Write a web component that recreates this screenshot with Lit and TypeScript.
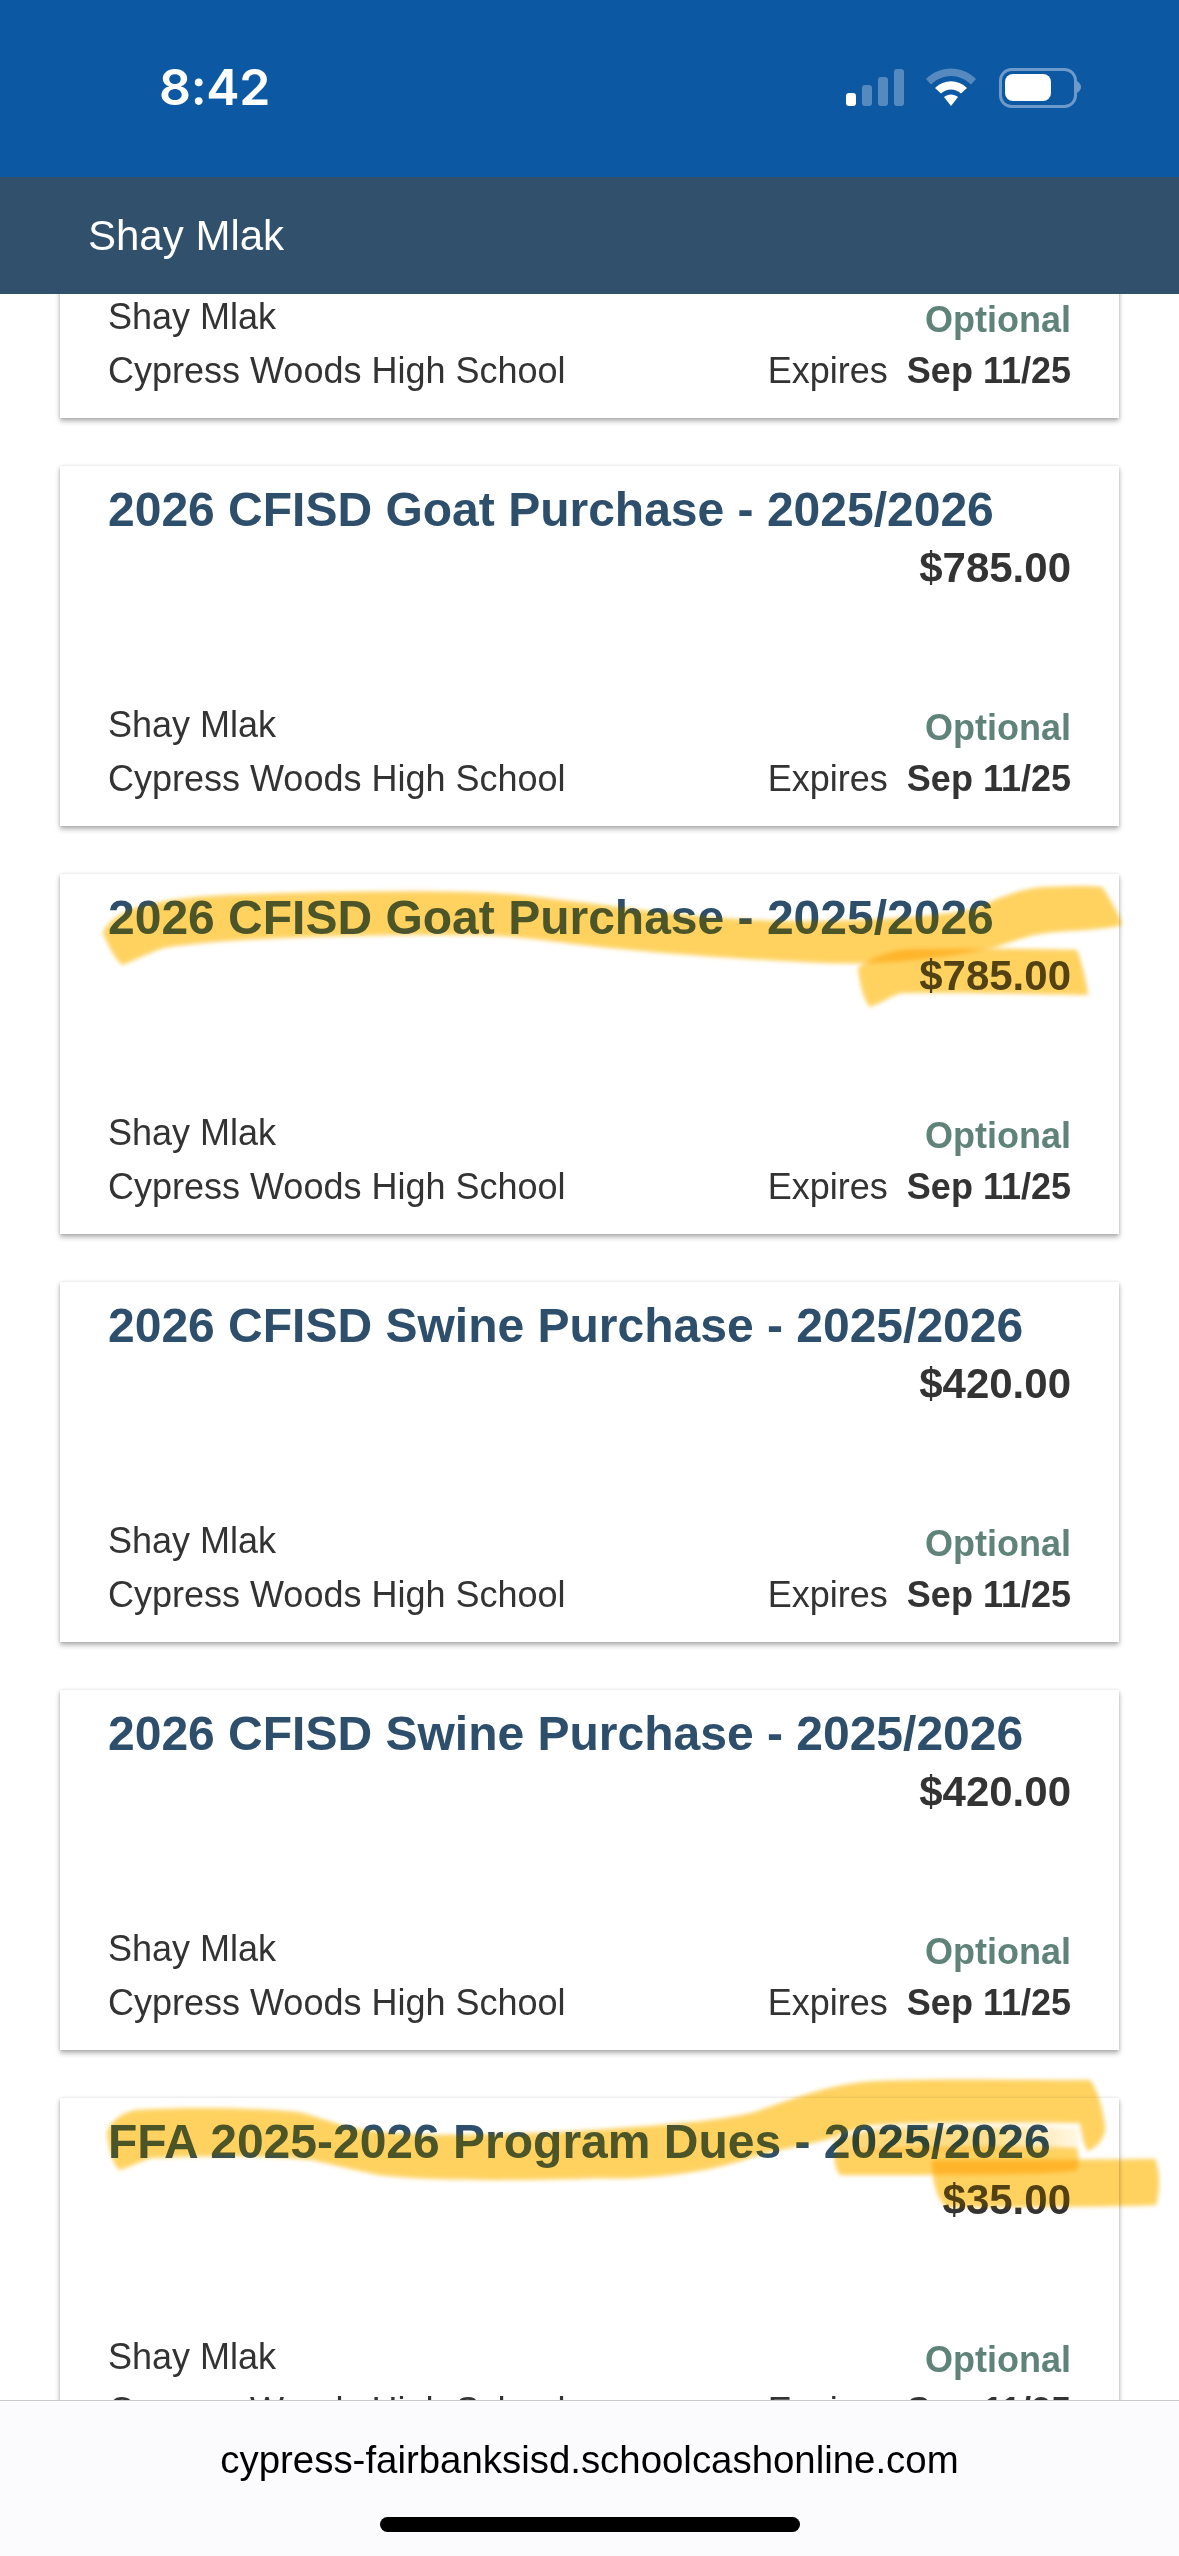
import { LitElement, html, css, svg } from "lit";
import { customElement } from "lit/decorators.js";

interface Fee { title: string; price: string; }

const FEES: Fee[] = [
  { title: "2026 CFISD Goat Purchase - 2025/2026", price: "$785.00" },
  { title: "2026 CFISD Goat Purchase - 2025/2026", price: "$785.00" },
  { title: "2026 CFISD Goat Purchase - 2025/2026", price: "$785.00" },
  { title: "2026 CFISD Swine Purchase - 2025/2026", price: "$420.00" },
  { title: "2026 CFISD Swine Purchase - 2025/2026", price: "$420.00" },
  { title: "FFA 2025-2026 Program Dues - 2025/2026", price: "$35.00" },
];

const MARKS = [
  "M103 933 C106 925 115 915 135 908 C160 902 180 897 230 895 C320 892 410 890 489 893 C560 897 650 915 752 920 C820 923 900 920 960 912 C980 908 990 902 1000 898 C1020 890 1035 887 1050 887 C1070 886 1090 886 1102 887 C1110 900 1118 912 1122 925 C1108 928 1095 929 1083 930 C1065 931 1050 932 1033 935 C1018 939 1005 944 993 948 C950 957 890 965 827 963 C760 960 680 955 601 947 C540 940 520 936 480 935 C390 934 290 936 213 942 C195 944 178 945 163 948 C148 953 135 960 122 965 C115 958 108 945 103 933 Z",
  "M858 968 C870 958 885 953 900 950 C950 948 1030 949 1077 950 C1082 965 1086 980 1088 995 C1030 994 950 992 900 993 C890 997 880 1003 870 1007 C864 1000 860 985 858 968 Z",
  "M107 2133 C110 2122 122 2112 137 2110 C190 2107 250 2108 297 2112 C315 2116 330 2122 347 2127 C380 2133 410 2135 447 2135 C530 2135 600 2130 662 2125 C700 2122 730 2118 752 2113 C790 2100 825 2086 865 2082 C930 2078 1020 2081 1090 2080 C1097 2090 1102 2105 1105 2127 C1105 2138 1098 2146 1088 2151 C1084 2145 1082 2135 1080 2123 C1000 2122 900 2122 870 2125 C850 2130 835 2137 825 2140 C800 2146 775 2150 752 2157 C710 2172 650 2180 601 2178 C540 2180 440 2182 380 2175 C355 2170 335 2165 313 2160 C270 2155 210 2155 150 2158 C140 2162 130 2166 120 2170 C113 2165 109 2150 107 2133 Z",
  "M835 2152 C860 2150 880 2149 905 2148 C960 2147 1030 2147 1077 2148 C1079 2158 1079 2165 1077 2170 C1060 2174 1000 2175 840 2175 C835 2168 834 2160 835 2152 Z",
  "M932 2160 C1000 2160 1090 2160 1155 2159 C1160 2172 1160 2190 1156 2205 C1090 2207 1010 2207 947 2207 C937 2200 932 2180 932 2160 Z",
];

const PALE_BAND = "M835 2140 C850 2134 870 2129 890 2128 C950 2127 1030 2127 1078 2128 L1078 2149 L835 2152 Z";

@customElement("app-root")
export class AppRoot extends LitElement {
  static styles = css`
    :host {
      display: block;
      position: relative;
      width: 1179px;
      height: 2556px;
      overflow: hidden;
      background: #fff;
      font-family: "Liberation Sans", Arial, sans-serif;
    }
    .page { display: flex; flex-direction: column; height: 100%; }
    .status {
      flex: 0 0 177px;
      box-sizing: border-box;
      background: #0d58a3;
      display: flex;
      justify-content: space-between;
      align-items: flex-start;
      padding: 59px 97px 0 159px;
      color: #fff;
    }
    .time { font-family: Inter, sans-serif; font-weight: 600; font-size: 50px; line-height: 56px; letter-spacing: -0.3px; }
    .status-icons { display: block; margin-top: 9px; }
    .header {
      flex: 0 0 117px;
      box-sizing: border-box;
      background: #30506b;
      color: #fff;
      font-size: 42px;
      padding-left: 88px;
      display: flex;
      align-items: center;
      position: relative;
      z-index: 1;
    }
    .scroll { flex: 1 1 0; min-height: 0; overflow: hidden; padding: 0 60px; }
    .list { display: flex; flex-direction: column; gap: 48px; margin-top: -236px; }
    .card {
      height: 360px;
      box-sizing: border-box;
      background: #fff;
      box-shadow: 0 3px 5px rgba(0, 0, 0, 0.32), 0 0 3px rgba(0, 0, 0, 0.1);
      padding: 16px 48px 20px;
      display: flex;
      flex-direction: column;
      color: #333;
    }
    .title { font-size: 48px; font-weight: 700; line-height: 56px; color: #2d4f6c; white-space: nowrap; }
    .price { font-size: 42px; font-weight: 700; line-height: 48px; text-align: right; margin-top: 6px; }
    .meta { margin-top: auto; font-size: 36px; line-height: 54px; }
    .row { display: flex; justify-content: space-between; }
    .optional { font-weight: 700; color: #5f8279; position: relative; top: 3px; }
    .expires b { margin-left: 9px; }
    .bottom {
      flex: 0 0 156px;
      box-sizing: border-box;
      background: #fbfbfd;
      border-top: 1px solid #c9c9cb;
      display: flex;
      flex-direction: column;
      align-items: center;
      color: #000;
      position: relative;
      z-index: 1;
    }
    .url { font-size: 38.4px; line-height: 44px; margin-top: 37px; }
    .home { width: 420px; height: 15px; border-radius: 8px; background: #000; margin-top: 35px; }
    .marks { position: absolute; inset: 0; width: 1179px; height: 2556px; pointer-events: none; z-index: 2; }
    .tint { mix-blend-mode: multiply; }
    .tint path { mix-blend-mode: multiply; }
    .tint .stroke { fill: #ffd671; }
    .wash { opacity: 0.15; }
    .wash .stroke { fill: #ffbe00; }
  `;

  private statusIcons() {
    return svg`<svg class="status-icons" width="236" height="40" viewBox="846 68 236 40">
      <rect x="846" y="93" width="10" height="13" rx="3" fill="#fff"/>
      <g fill="#fff" fill-opacity="0.3">
        <rect x="862" y="85" width="10" height="21" rx="3"/>
        <rect x="878" y="77" width="10" height="29" rx="3"/>
        <rect x="894" y="69" width="10" height="37" rx="3"/>
        <path d="M926 79 C940 65 962 65 976 79 L971 84.5 C959 73 943 73 931 84.5 Z"/>
        <rect x="1000.5" y="69.5" width="75" height="37" rx="11" fill="none" stroke="#fff" stroke-opacity="0.4" stroke-width="3"/>
        <path d="M1077 81 C1080 83 1081 85 1081 87 C1081 89 1080 91 1077 93 Z" fill-opacity="0.4"/>
      </g>
      <path fill="#fff" d="M935 88 C944 79 958 79 967 88 L961 93.5 C955 88 947 88 941 93.5 Z"/>
      <path fill="#fff" d="M944 97 C948 93.5 954 93.5 958 97 L951 106 Z"/>
      <rect x="1005" y="74" width="46" height="27" rx="8" fill="#fff"/>
    </svg>`;
  }

  private card(f: Fee) {
    return html`<article class="card">
      <div class="title">${f.title}</div>
      <div class="price">${f.price}</div>
      <div class="meta">
        <div class="row"><span>Shay Mlak</span><span class="optional">Optional</span></div>
        <div class="row"><span>Cypress Woods High School</span><span class="expires">Expires <b>Sep 11/25</b></span></div>
      </div>
    </article>`;
  }

  render() {
    return html`
      <div class="page">
        <div class="status"><span class="time">8:42</span>${this.statusIcons()}</div>
        <div class="header">Shay Mlak</div>
        <div class="scroll"><div class="list">${FEES.map((f) => this.card(f))}</div></div>
        <div class="bottom">
          <div class="url">cypress-fairbanksisd.schoolcashonline.com</div>
          <div class="home"></div>
        </div>
      </div>
      <svg class="marks tint" viewBox="0 0 1179 2556" aria-hidden="true">
        <defs>
          <filter id="soft" x="-5%" y="-20%" width="110%" height="140%"><feGaussianBlur stdDeviation="2"/></filter>
          <linearGradient id="pale" gradientUnits="userSpaceOnUse" x1="835" y1="0" x2="1078" y2="0">
            <stop offset="0" stop-color="#ffd671"/>
            <stop offset="0.65" stop-color="#ffe08f"/>
            <stop offset="1" stop-color="#fff7e2"/>
          </linearGradient>
        </defs>
        <g style="isolation:isolate">
          ${MARKS.map((d) => svg`<path class="stroke" d="${d}" filter="url(#soft)"/>`)}
          <path d="${PALE_BAND}" fill="url(#pale)" filter="url(#soft)"/>
        </g>
      </svg>
      <svg class="marks wash" viewBox="0 0 1179 2556" aria-hidden="true">
        <defs><filter id="soft2" x="-5%" y="-20%" width="110%" height="140%"><feGaussianBlur stdDeviation="2"/></filter></defs>
        <g filter="url(#soft2)">${MARKS.map((d) => svg`<path class="stroke" d="${d}"/>`)}</g>
      </svg>
    `;
  }
}
